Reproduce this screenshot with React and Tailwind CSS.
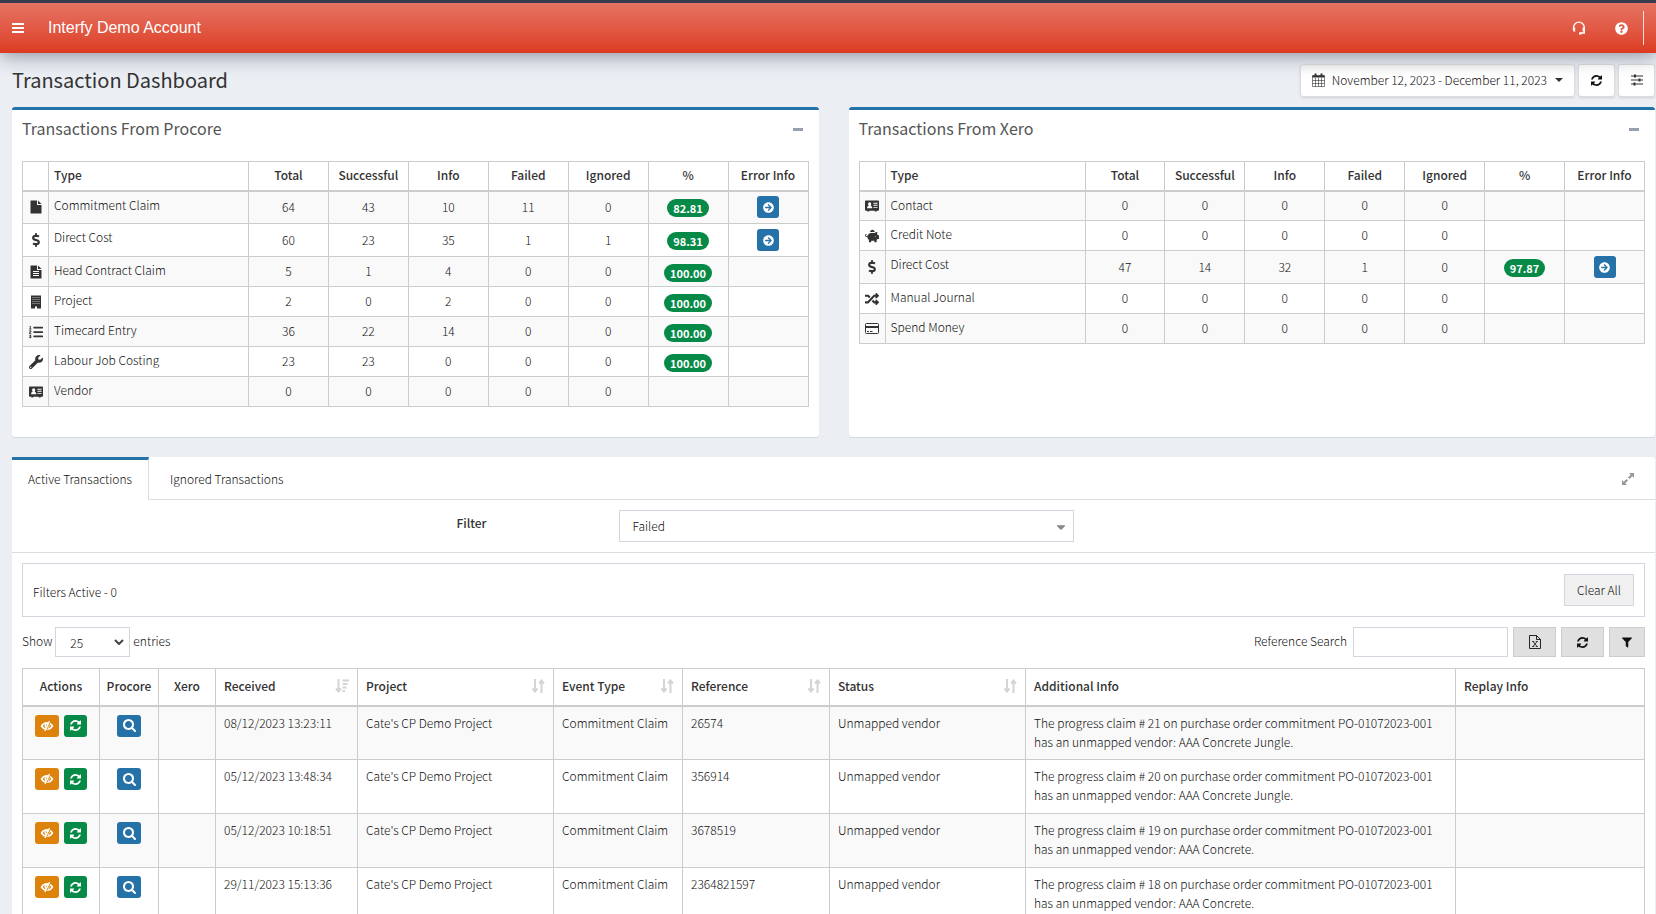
import React, { useState } from "react"
import {
    FaDollarSign,
    FaListOl,
    FaWrench,
    FaPiggyBank,
    FaRandom,
    FaQuestionCircle,
    FaArrowCircleRight,
    FaCaretDown,
    FaFilter,
} from "react-icons/fa"

// Old style two-arrow refresh glyph
function RefreshIcon({ className }) {
    return (
        <svg viewBox="0 0 1536 1536" className={className} fill="currentColor" aria-hidden="true">
            <path d="M1511 928q0 5-1 7-64 268-268 434.500T764 1536q-146 0-282.500-55T238 1324l-129 129q-19 19-45 19t-45-19-19-45V960q0-26 19-45t45-19h448q26 0 45 19t19 45-19 45l-137 137q71 66 161 102t187 36q134 0 250-65t186-179q11-17 53-117 8-23 30-23h192q13 0 22.500 9.500T1511 928zm25-800v448q0 26-19 45t-45 19h-448q-26 0-45-19t-19-45 19-45l138-138Q969 256 768 256q-134 0-250 65T332 500q-11 17-53 117-8 23-30 23H50q-13 0-22.500-9.500T18 608v-7q65-268 270-434.500T768 0q146 0 284 55.500T1297 212l130-129q19-19 45-19t45 19 19 45z" />
        </svg>
    )
}

function SearchIcon() {
    return (
        <svg viewBox="0 0 1664 1664" className="w-[13px] h-[13px]" fill="currentColor" aria-hidden="true">
            <path d="M1152 704q0-185-131.500-316.500T704 256 387.500 387.500 256 704t131.500 316.500T704 1152t316.500-131.500T1152 704zm512 832q0 52-38 90t-90 38q-54 0-90-38l-343-342q-179 124-399 124-143 0-273.500-55.500t-225-150-150-225T0 704t55.500-273.500 150-225 225-150T704 0t273.500 55.500 225 150 150 225T1408 704q0 220-124 399l343 343q37 37 37 90z" />
        </svg>
    )
}

function BarsIcon() {
    return (
        <svg viewBox="0 0 12 10" className="w-3 h-2.5" fill="currentColor" aria-hidden="true">
            <path d="M0 0h12v2H0zM0 4h12v2H0zM0 8h12v2H0z" />
        </svg>
    )
}

function FileIcon({ className }) {
    return (
        <svg viewBox="0 0 14 14" className={className} fill="currentColor" aria-hidden="true">
            <path d="M2 .5h6v4.500h4.500V13q0 .5-.5.5H2q-.5 0-.5-.5V1q0-.5.5-.5zM9 .5L12.500 4H9z" />
        </svg>
    )
}

function FileTextIcon({ className }) {
    return (
        <svg viewBox="0 0 14 14" className={className} fill="currentColor" aria-hidden="true">
            <path fillRule="evenodd" d="M2 .5h6v4.500h4.500V13q0 .5-.5.5H2q-.5 0-.5-.5V1q0-.5.5-.5zM9 .5L12.500 4H9zM4 6h6v1H4zM4 8h6v1H4zM4 10h6v1H4z" />
        </svg>
    )
}

function BuildingIcon({ className }) {
    return (
        <svg viewBox="0 0 14 14" className={className} aria-hidden="true">
            <path fill="currentColor" d="M2 .5h10v13H8v-2H6v2H2z" />
            <path stroke="#bbb" strokeDasharray="1 1" d="M3.500 2.500h7M3.500 4.500h7M3.500 6.500h7M3.500 8.500h7" />
        </svg>
    )
}

function AddressCardIcon({ className }) {
    return (
        <svg viewBox="0 0 15 12" className={className} aria-hidden="true">
            <path fill="currentColor" d="M1 0h13q1 0 1 1v9q0 1-1 1h-1.500v1h-2v-1h-6v1h-2v-1H1q-1 0-1-1V1q0-1 1-1z" />
            <path fill="white" d="M5 2q1.700 0 1.700 1.800 0 1.200-.7 1.900 1.800.6 1.800 2.300v.5H2.200V8q0-1.700 1.800-2.300-.7-.7-.7-1.900Q3.300 2 5 2zM9 2.500h4.500v1H9zM9 4.700h4.500v1H9zM9 7h4.500v1H9z" />
        </svg>
    )
}

function CreditCardIcon({ className }) {
    return (
        <svg viewBox="0 0 14 14" className={className} fill="none" stroke="currentColor" aria-hidden="true">
            <rect x="0.500" y="1.500" width="13" height="10" rx="1" />
            <path d="M.5 5h13" strokeWidth="2" />
            <path d="M2 9.500h2M5 9.500h2.500" />
        </svg>
    )
}

function ExcelIcon() {
    return (
        <svg viewBox="0 0 12 14" className="w-3 h-3.5" fill="none" stroke="currentColor" aria-hidden="true">
            <path d="M.5.5h7l4 4v9H.5zM7.500.5v4h4" strokeWidth="0.900" />
            <path d="M4 6.500l4 5M8 6.500l-4 5M3.200 6.500h2M6.800 6.500h2M3.200 11.500h2M6.800 11.500h2" strokeWidth="0.800" />
        </svg>
    )
}

function ExpandIcon() {
    return (
        <svg viewBox="0 0 12 12" className="w-3 h-3" fill="currentColor" aria-hidden="true">
            <path d="M7 0h5v5l-1.700-1.700-2.800 2.800-1.600-1.600 2.800-2.800zM5 12H0V7l1.700 1.700 2.800-2.800 1.600 1.600-2.800 2.800z" />
        </svg>
    )
}

function CalendarIcon() {
    return (
        <svg viewBox="0 0 13 14" className="w-[13px] h-3.5" fill="none" stroke="#333" aria-hidden="true">
            <path d="M.5 2.500h12v11H.5zM.5 7.500h12M.5 10.500h12M3.500 5v8.500M6.500 5v8.500M9.500 5v8.500" strokeWidth="0.600" />
            <path d="M.5 3.500h12" strokeWidth="2" />
            <path d="M3.500.5v3M9.500.5v3" strokeWidth="2" />
        </svg>
    )
}

function SlidersIcon() {
    return (
        <svg viewBox="0 0 12 12" className="w-3 h-3" stroke="#333" fill="none" aria-hidden="true">
            <path d="M0 2h12M0 6h12M0 10h12" strokeWidth="1.200" />
            <path d="M4 0.500v3M8.500 4.500v3M3.500 8.500v3" strokeWidth="2" />
        </svg>
    )
}

function HeadsetIcon() {
    return (
        <svg viewBox="0 0 14 14" className="w-3.5 h-3.5" fill="none" stroke="white" aria-hidden="true">
            <path d="M1.500 9V6.500a5.200 5.200 0 0 1 10.800 0V12H8" strokeWidth="1.300" />
            <path d="M2.200 6.500v4M11.600 6.500v4M7 12.500h2.500" strokeWidth="2" />
        </svg>
    )
}

function EyeSlashIcon() {
    return (
        <svg viewBox="0 0 14 12" className="w-3.5 h-3" fill="none" stroke="white" aria-hidden="true">
            <path d="M1.500 6Q3.500 2.800 7 2.800T12.500 6Q10.500 9.200 7 9.200T1.500 6z" strokeWidth="1.500" />
            <circle cx="7" cy="5.500" r="1.800" strokeWidth="1.500" />
            <path d="M10.500 1.200L6 11" stroke="#dd820a" strokeWidth="1" />
            <path d="M9.500 1L5 11" strokeWidth="1.300" />
        </svg>
    )
}

function SortIcon({ active }) {
    return (
        <svg viewBox="0 0 14 14" className="mt-0.5 w-3.5 h-3.5" fill="none" stroke="#d4d4d4" aria-hidden="true">
            {active ? (
                <path d="M3.500 0v12M1 9.500l2.500 3 2.500-3M7.500 1.500H14M7.500 5h5M7.500 8.500h4M7.500 12h2.500" strokeWidth="2" />
            ) : (
                <path d="M4 0v12M1.500 9.500l2.500 3 2.500-3M10.500 14V2M8 4.500l2.500-3 2.500 3" strokeWidth="2" />
            )}
        </svg>
    )
}

const procoreRows = [
    { icon: FileIcon, type: "Commitment Claim", counts: [64, 43, 10, 11, 0], percent: "82.81", error: true },
    { icon: FaDollarSign, type: "Direct Cost", counts: [60, 23, 35, 1, 1], percent: "98.31", error: true },
    { icon: FileTextIcon, type: "Head Contract Claim", counts: [5, 1, 4, 0, 0], percent: "100.00" },
    { icon: BuildingIcon, type: "Project", counts: [2, 0, 2, 0, 0], percent: "100.00" },
    { icon: FaListOl, type: "Timecard Entry", counts: [36, 22, 14, 0, 0], percent: "100.00" },
    { icon: FaWrench, type: "Labour Job Costing", counts: [23, 23, 0, 0, 0], percent: "100.00" },
    { icon: AddressCardIcon, type: "Vendor", counts: [0, 0, 0, 0, 0] },
]

const xeroRows = [
    { icon: AddressCardIcon, type: "Contact", counts: [0, 0, 0, 0, 0] },
    { icon: FaPiggyBank, type: "Credit Note", counts: [0, 0, 0, 0, 0] },
    { icon: FaDollarSign, type: "Direct Cost", counts: [47, 14, 32, 1, 0], percent: "97.87", error: true },
    { icon: FaRandom, type: "Manual Journal", counts: [0, 0, 0, 0, 0] },
    { icon: CreditCardIcon, type: "Spend Money", counts: [0, 0, 0, 0, 0] },
]

const transactions = [
    { received: "08/12/2023 13:23:11", reference: "26574", claim: 21, vendor: "AAA Concrete Jungle." },
    { received: "05/12/2023 13:48:34", reference: "356914", claim: 20, vendor: "AAA Concrete Jungle." },
    { received: "05/12/2023 10:18:51", reference: "3678519", claim: 19, vendor: "AAA Concrete." },
    { received: "29/11/2023 15:13:36", reference: "2364821597", claim: 18, vendor: "AAA Concrete." },
]

const columns = [
    { label: "Actions", width: "w-[77px]", center: true },
    { label: "Procore", width: "w-[59px]", center: true },
    { label: "Xero", width: "w-[57px]", center: true },
    { label: "Received", width: "w-[142px]", sort: "active" },
    { label: "Project", width: "w-[196px]", sort: "both" },
    { label: "Event Type", width: "w-[129px]", sort: "both" },
    { label: "Reference", width: "w-[147px]", sort: "both" },
    { label: "Status", width: "w-[196px]", sort: "both" },
    { label: "Additional Info", width: "w-[430px]" },
    { label: "Replay Info", width: "w-[189px]" },
]

function SummaryCard({ title, rows }) {
    return (
        <section className="flex-1 min-w-0 min-h-[330px] bg-white border-t-3 border-[#2572a9] rounded-[3px] shadow-[0_1px_1px_rgba(0,0,0,0.1)] px-2.5">
            <div className="flex justify-between items-center h-[51px] pb-4">
                <h2 className="text-[16px] leading-5 font-normal text-[#555]">{title}</h2>
                <button aria-label={`Collapse ${title}`} className="px-1.5 pt-1">
                    <span className="block w-2.5 h-[3px] bg-[#97a0b3]"></span>
                </button>
            </div>
            <table className="w-full table-fixed border-collapse">
                <thead>
                    <tr className="h-[29px] text-[#333]">
                        <th aria-label="Icon" className="w-[26px] border border-b-2 border-[#ccc]"></th>
                        <th className="w-[200px] border border-b-2 border-[#ccc] px-[5px] pb-[3px] text-left font-medium">Type</th>
                        {["Total", "Successful", "Info", "Failed", "Ignored", "%", "Error Info"].map((label) => (
                            <th key={label} className="border border-b-2 border-[#ccc] pb-[3px] font-medium">{label}</th>
                        ))}
                    </tr>
                </thead>
                <tbody>
                    {rows.map((row) => (
                        <tr key={row.type} className={row.error ? "h-[33px] odd:bg-[#f9f9f9]" : "h-[30px] odd:bg-[#f9f9f9]"}>
                            <td className="border border-[#ccc] text-[#333]">
                                <row.icon className="mx-auto w-3.5 h-3.5" />
                            </td>
                            <td className="border border-[#ccc] px-[5px] pt-[3px] align-top">{row.type}</td>
                            {row.counts.map((count, i) => (
                                <td key={i} className="border border-[#ccc] pb-0.5 text-center">{count}</td>
                            ))}
                            <td className="border border-[#ccc] pt-0.5 text-center">
                                {row.percent && (
                                    <span className="block mx-auto w-fit h-[18px] px-1.5 rounded-full bg-[#078a47] text-white text-[11px] leading-[18px] font-bold">
                                        {row.percent}
                                    </span>
                                )}
                            </td>
                            <td className="border border-[#ccc]">
                                {row.error && (
                                    <button
                                        aria-label={`Show ${row.type} errors`}
                                        className="flex items-center justify-center mx-auto w-[22px] h-[22px] rounded-[3px] bg-[#2572a9] text-white"
                                    >
                                        <FaArrowCircleRight className="w-[11px] h-[11px]" />
                                    </button>
                                )}
                            </td>
                        </tr>
                    ))}
                </tbody>
            </table>
        </section>
    )
}

export default function App() {
    const [activeTab, setActiveTab] = useState("active")

    return (
        <div className="h-screen overflow-hidden bg-[#ebeef3] text-[#111] text-[12px] leading-[19px] font-light font-['Noto_Sans_CJK_SC','Noto_Sans',sans-serif]">
            {/* --- TOP BAR --- */}
            <header className="relative flex items-center h-[53px] border-t-3 border-[#363c4d] bg-linear-to-b from-[#e57363] to-[#dc3a1f] text-white shadow-[0_2px_20px_rgba(60,70,90,0.6)]">
                <button aria-label="Menu" className="ml-3 w-3">
                    <BarsIcon />
                </button>
                <div className="ml-6 text-[16px] leading-6 font-normal font-['Liberation_Sans',sans-serif]">Interfy Demo Account</div>
                <div className="ml-auto flex items-center">
                    <button aria-label="Support" className="mr-[29px]"><HeadsetIcon /></button>
                    <button aria-label="Help" className="mr-[15px]"><FaQuestionCircle className="w-[13px] h-[13px]" /></button>
                    <div className="w-px h-[34px] mr-3 bg-white/80" />
                </div>
            </header>

            <main className="pl-3">
                <div className="flex items-center justify-between h-[54px]">
                    <h1 className="text-[20px] leading-7 font-normal text-[#333]">Transaction Dashboard</h1>
                    <div className="flex gap-[3px] pr-px">
                        <button className="flex items-center h-[33px] px-[11px] rounded-[3px] border border-[#ddd] bg-linear-to-b from-[#f5f5f5] to-white to-30% shadow-sm">
                            <CalendarIcon />
                            <span className="ml-[7px] mr-2 pb-0.5">November 12, 2023 - December 11, 2023</span>
                            <svg viewBox="0 0 8 4" className="w-2 h-1" fill="#333" aria-hidden="true"><path d="M0 0h8L4 4z" /></svg>
                        </button>
                        <button aria-label="Refresh" className="flex items-center justify-center w-[37px] rounded-[3px] border border-[#ddd] bg-white shadow-sm">
                            <RefreshIcon className="w-[11px] h-[11px]" />
                        </button>
                        <button aria-label="Settings" className="flex items-center justify-center w-[37px] rounded-[3px] border border-[#ddd] bg-white shadow-sm">
                            <SlidersIcon />
                        </button>
                    </div>
                </div>

                {/* --- SUMMARY --- */}
                <div className="flex gap-[30px] pr-px">
                    <SummaryCard title="Transactions From Procore" rows={procoreRows} />
                    <SummaryCard title="Transactions From Xero" rows={xeroRows} />
                </div>

                {/* --- TRANSACTIONS --- */}
                <section className="mt-5 mr-px bg-white rounded-t-[3px]">
                    <div role="tablist" className="flex h-[43px]">
                        <button
                            role="tab"
                            aria-selected={activeTab === "active"}
                            onClick={() => setActiveTab("active")}
                            className="w-[137px] pb-[3px] border-t-3 border-t-[#2572a9] border-r border-r-[#ddd]"
                        >
                            Active Transactions
                        </button>
                        <div className="flex flex-1 items-center justify-between border-b border-[#ddd] pl-[21px] pr-[21px]">
                            <button role="tab" aria-selected={activeTab === "ignored"} onClick={() => setActiveTab("ignored")}>
                                Ignored Transactions
                            </button>
                            <button aria-label="Expand" className="pt-0.5 text-[#999]"><ExpandIcon /></button>
                        </div>
                    </div>

                    <div className="flex h-[53px] border-b border-[#ddd] pt-2.5">
                        <div className="w-[29%] text-right">
                            <label htmlFor="filter" className="mr-[2px] font-medium leading-[26px] text-[#333]">Filter</label>
                        </div>
                        <div className="relative w-[455px] ml-[131px]">
                            <select id="filter" className="appearance-none w-full h-8 px-3 pb-0.5 border border-[#d2d6de] bg-white">
                                <option>Failed</option>
                            </select>
                            <FaCaretDown className="absolute right-2 top-2.5 w-2.5 h-3.5 text-[#888] pointer-events-none" />
                        </div>
                    </div>

                    <div className="px-2.5 pt-2.5">
                        <div className="flex items-center justify-between h-[54px] px-2.5 border border-[#d2d6de]">
                            <span className="pt-0.5">Filters Active - 0</span>
                            <button className="h-8 px-3 pb-0.5 border border-[#d2d6de] bg-[#f0f0f0]">Clear All</button>
                        </div>

                        <div className="flex items-center justify-between h-[30px] mt-2.5">
                            <label className="flex items-center gap-[3px]">
                                <span className="pb-1">Show</span>
                                <span className="relative">
                                    <select className="appearance-none w-[75px] h-[30px] pl-3.5 border border-[#d2d6de] bg-white">
                                        <option>25</option>
                                    </select>
                                    <svg viewBox="0 0 10 6" className="absolute right-1.5 top-3 w-2.5 h-1.5 pointer-events-none" fill="none" stroke="#444" strokeWidth="2" aria-hidden="true">
                                        <path d="M1 1l4 4 4-4" />
                                    </svg>
                                </span>
                                <span className="pb-1">entries</span>
                            </label>
                            <div className="flex items-center gap-[5px]">
                                <label htmlFor="reference-search" className="mr-px pb-1">Reference Search</label>
                                <input id="reference-search" type="text" className="w-[155px] h-[30px] px-2 border border-[#d2d6de] bg-white" />
                                <button aria-label="Export to Excel" className="flex items-center justify-center w-[43px] h-[30px] border border-[#ccc] bg-[#e0e0e0]">
                                    <ExcelIcon />
                                </button>
                                <button aria-label="Reload table" className="flex items-center justify-center w-[43px] h-[30px] border border-[#ccc] bg-[#e0e0e0]">
                                    <RefreshIcon className="w-[11px] h-[11px]" />
                                </button>
                                <button aria-label="Filter table" className="flex items-center justify-center w-9 h-[30px] border border-[#ccc] bg-[#e0e0e0]">
                                    <FaFilter className="w-2.5 h-[11px]" />
                                </button>
                            </div>
                        </div>

                        <table className="w-full mt-[11px] table-fixed border-collapse">
                            <thead>
                                <tr className="h-[37px] text-[#333]">
                                    {columns.map((column) => (
                                        <th key={column.label} className={`${column.width} border border-b-2 border-[#ccc] pb-[3px] font-medium ${column.center ? "text-center" : "px-2 text-left"}`}>
                                            {column.sort ? (
                                                <div className="flex items-center justify-between">
                                                    {column.label}
                                                    <SortIcon active={column.sort === "active"} />
                                                </div>
                                            ) : column.label}
                                        </th>
                                    ))}
                                </tr>
                            </thead>
                            <tbody>
                                {transactions.map((row) => (
                                    <tr key={row.reference} className="h-[54px] align-top odd:bg-[#f9f9f9]">
                                        <td className="border border-[#ccc] pt-2">
                                            <div className="flex justify-center gap-[5px]">
                                                <button aria-label="Ignore transaction" className="flex items-center justify-center w-6 h-[22px] rounded-[3px] bg-[#dd820a]">
                                                    <EyeSlashIcon />
                                                </button>
                                                <button aria-label="Replay transaction" className="flex items-center justify-center w-[23px] h-[22px] rounded-[3px] bg-[#078a47] text-white">
                                                    <RefreshIcon className="w-[11px] h-[11px]" />
                                                </button>
                                            </div>
                                        </td>
                                        <td className="border border-[#ccc] pt-2">
                                            <button aria-label="View in Procore" className="flex items-center justify-center mx-auto w-6 h-[22px] rounded-[3px] bg-[#2572a9] text-white">
                                                <SearchIcon />
                                            </button>
                                        </td>
                                        <td className="border border-[#ccc]"></td>
                                        <td className="border border-[#ccc] px-2 pt-1.5">{row.received}</td>
                                        <td className="border border-[#ccc] px-2 pt-1.5">Cate's CP Demo Project</td>
                                        <td className="border border-[#ccc] px-2 pt-1.5">Commitment Claim</td>
                                        <td className="border border-[#ccc] px-2 pt-1.5">{row.reference}</td>
                                        <td className="border border-[#ccc] px-2 pt-1.5">Unmapped vendor</td>
                                        <td className="border border-[#ccc] px-2 pt-1.5">
                                            The progress claim # {row.claim} on purchase order commitment PO-01072023-001
                                            <br />
                                            has an unmapped vendor: {row.vendor}
                                        </td>
                                        <td className="border border-[#ccc]"></td>
                                    </tr>
                                ))}
                            </tbody>
                        </table>
                    </div>
                </section>
            </main>
        </div>
    )
}
